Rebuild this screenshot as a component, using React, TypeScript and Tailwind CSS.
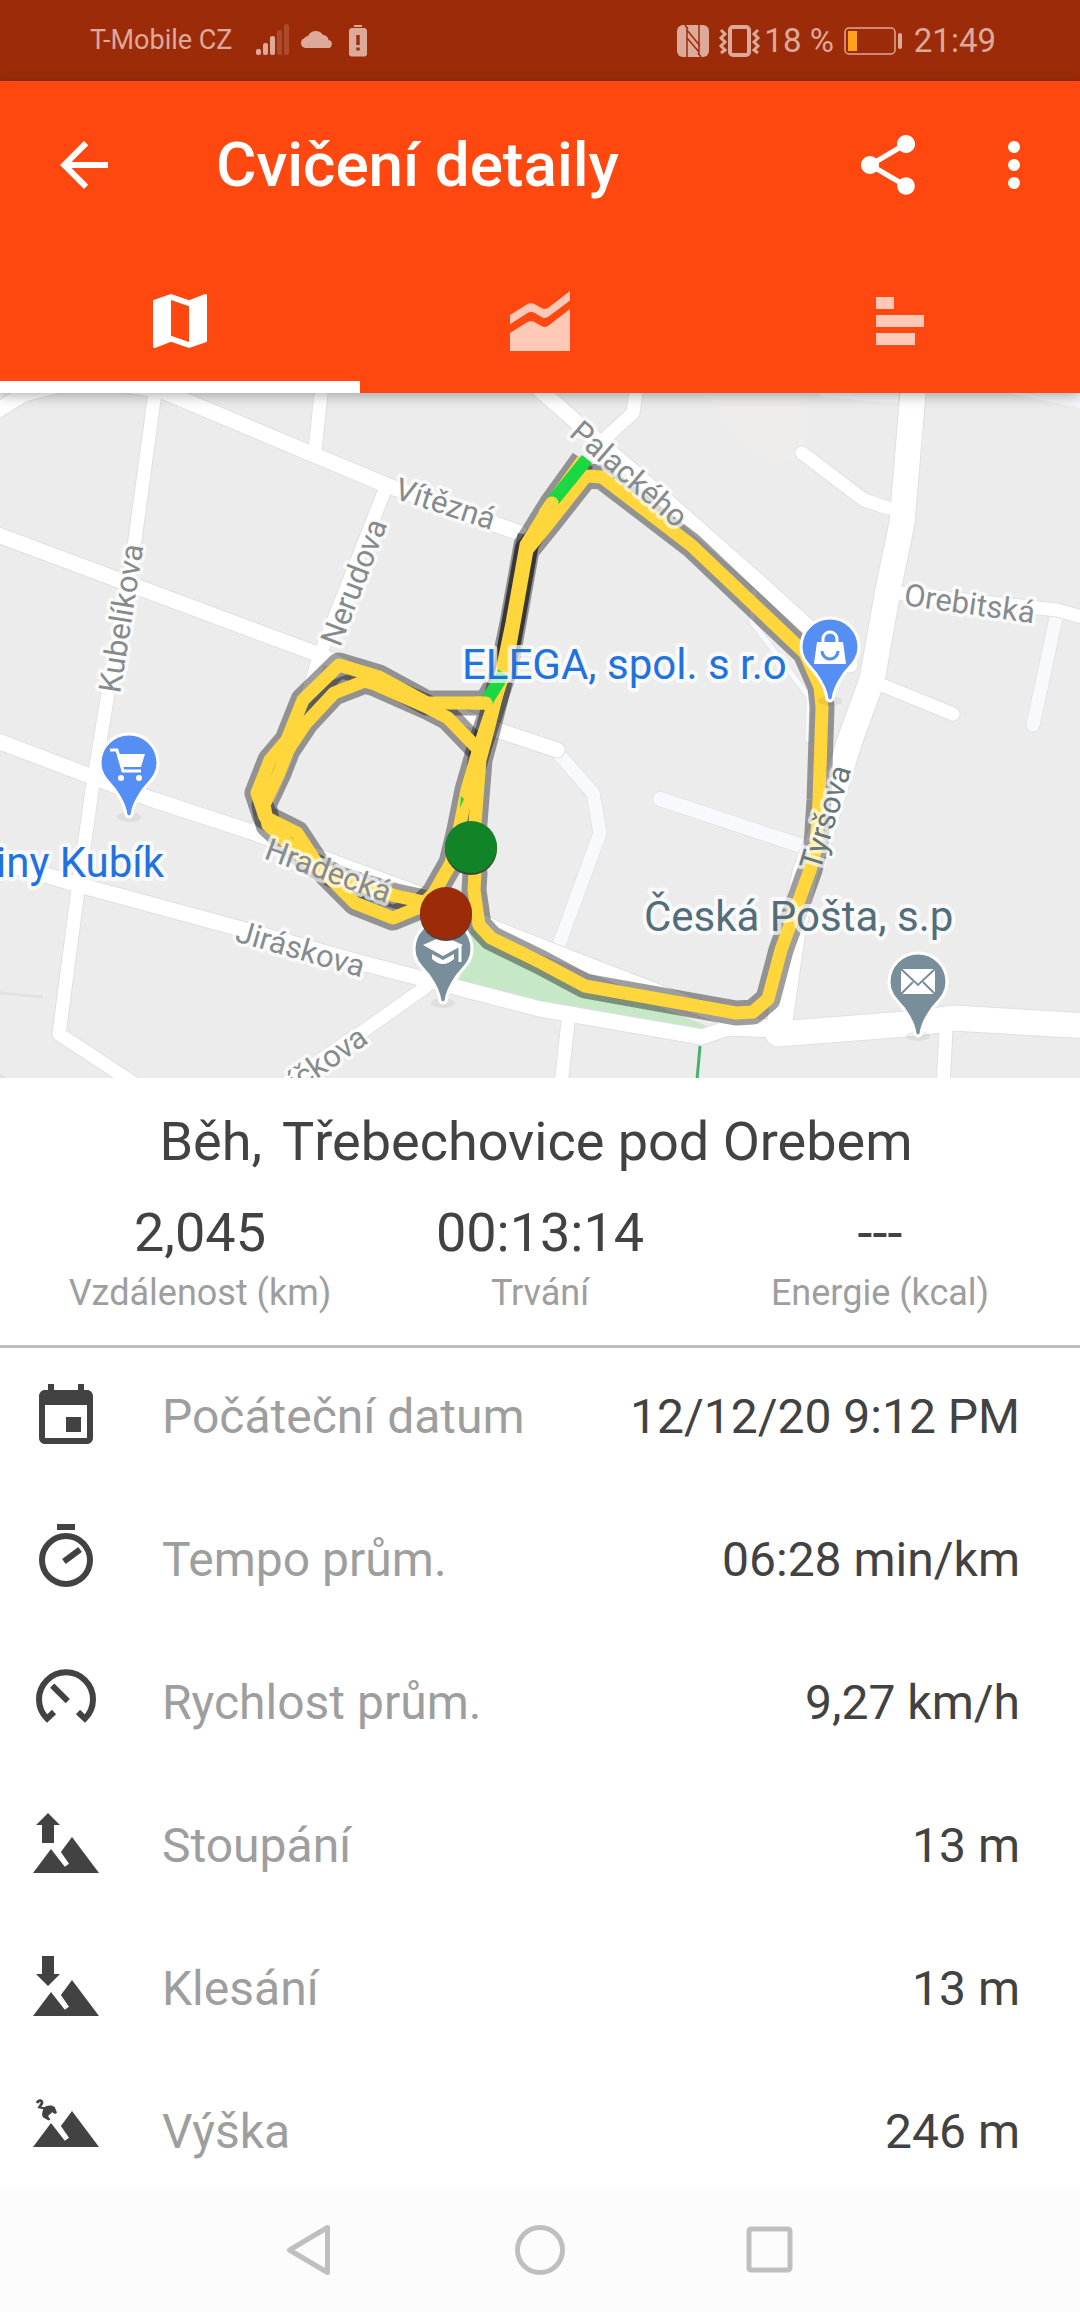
import React, { useState } from "react";

interface IconProps {
  className?: string;
}

const ArrowBackIcon = ({ className }: IconProps) => (
  <svg viewBox="0 0 24 24" fill="currentColor" className={className}>
    <path d="M20 11H7.83l5.59-5.59L12 4l-8 8 8 8 1.41-1.41L7.83 13H20v-2z" />
  </svg>
);

const ShareIcon = ({ className }: IconProps) => (
  <svg viewBox="0 0 24 24" fill="currentColor" className={className}>
    <path d="M18 16.08c-.76 0-1.44.3-1.96.77L8.91 12.7c.05-.23.09-.46.09-.7s-.04-.47-.09-.7l7.05-4.11c.54.5 1.25.81 2.04.81 1.66 0 3-1.34 3-3s-1.34-3-3-3-3 1.34-3 3c0 .24.04.47.09.7L8.04 9.81C7.5 9.31 6.79 9 6 9c-1.66 0-3 1.34-3 3s1.34 3 3 3c.79 0 1.5-.31 2.04-.81l7.12 4.16c-.05.21-.08.43-.08.65 0 1.61 1.31 2.92 2.92 2.92s2.92-1.31 2.92-2.92-1.31-2.92-2.92-2.92z" />
  </svg>
);

const MoreIcon = ({ className }: IconProps) => (
  <svg viewBox="0 0 24 24" fill="currentColor" className={className}>
    <circle cx="12" cy="6" r="2" />
    <circle cx="12" cy="12" r="2" />
    <circle cx="12" cy="18" r="2" />
  </svg>
);

const MapIcon = ({ className }: IconProps) => (
  <svg viewBox="0 0 24 24" fill="currentColor" className={className}>
    <path d="M20.5 3l-.16.03L15 5.1 9 3 3.36 4.9c-.21.07-.36.25-.36.48V20.5c0 .28.22.5.5.5l.16-.03L9 18.9l6 2.1 5.64-1.9c.21-.07.36-.25.36-.48V3.5c0-.28-.22-.5-.5-.5zM15 19l-6-2.11V5l6 2.11V19z" />
  </svg>
);

const ChartIcon = ({ className }: IconProps) => (
  <svg viewBox="0 0 24 24" fill="currentColor" className={className}>
    <path d="M2 10l5.6-3.5Q9 5.6 10.4 6.5L12.5 7.7Q13.7 8.4 15 7.4L22 2v3.2l-7 5.2q-1.3 1-2.5.3L10.4 9.4Q9 8.6 7.6 9.5L2 13.1z" />
    <path d="M2 16l5.6-3.5Q9 11.6 10.4 12.5L12.5 13.7Q13.7 14.4 15 13.4L22 8v14H2z" />
  </svg>
);

const LapsIcon = ({ className }: IconProps) => (
  <svg viewBox="0 0 24 24" fill="currentColor" className={className}>
    <path d="M4 4h6v4H4zM4 10h16v4H4zM4 16h13v4H4z" />
  </svg>
);

const DateIcon = ({ className }: IconProps) => (
  <svg viewBox="0 0 24 24" fill="currentColor" className={className}>
    <path d="M17 12h-5v5h5v-5zM16 1v2H8V1H6v2H5c-1.11 0-1.99.9-1.99 2L3 19c0 1.1.89 2 2 2h14c1.1 0 2-.9 2-2V5c0-1.1-.9-2-2-2h-1V1h-2zm3 18H5V8h14v11z" />
  </svg>
);

const PaceIcon = ({ className }: IconProps) => (
  <svg viewBox="0 0 24 24" fill="none" stroke="currentColor" strokeWidth="2" className={className}>
    <path d="M9 1h6M11.3 12.5l5.4-4" />
    <circle cx="12" cy="12" r="8" />
  </svg>
);

const SpeedIcon = ({ className }: IconProps) => (
  <svg viewBox="0 0 24 24" fill="none" stroke="currentColor" strokeWidth="2" className={className}>
    <path d="M8 15l-2.3 2.2A9 9 0 1 1 18.3 17.2L16 15M7.4 6.2l5.2 5.2" />
  </svg>
);

const AscentIcon = ({ className }: IconProps) => (
  <svg viewBox="0 0 24 24" fill="currentColor" className={className}>
    <path d="M6 1l4 4H8v6H4V5H2z" />
    <path d="M1 21l6-8 4.6 5.9 1.4-1L10.3 14 14 9l9 12z" />
  </svg>
);

const DescentIcon = ({ className }: IconProps) => (
  <svg viewBox="0 0 24 24" fill="currentColor" className={className}>
    <path d="M6 11l4-4H8V1H4v6H2z" />
    <path d="M1 21l6-8 4.6 5.9 1.4-1L10.3 14 14 9l9 12z" />
  </svg>
);

const AltitudeIcon = ({ className }: IconProps) => (
  <svg viewBox="0 0 24 24" fill="currentColor" className={className}>
    <path d="M2.4 2.4C2.7 1.2 4.2 1.3 4 2.4L3.2 3.7 5 4.1" fill="none" stroke="currentColor" strokeWidth="0.9" />
    <path d="M4.5 4.2C5 3 7.5 2.8 8.3 3.8L9 5.6l-.7.4-.9-.6-1.4 1.3.8 1.1-.6.4-1.8-1C3.8 6.5 4 5.5 4.5 4.2z" />
    <path d="M1 17l6-8 4.6 5.9 1.4-1L10.3 10 14 5l9 12z" />
  </svg>
);

const details = [
  { label: "Počáteční datum", value: "12/12/20 9:12 PM", icon: DateIcon },
  { label: "Tempo prům.", value: "06:28 min/km", icon: PaceIcon },
  { label: "Rychlost prům.", value: "9,27 km/h", icon: SpeedIcon },
  { label: "Stoupání", value: "13 m", icon: AscentIcon },
  { label: "Klesání", value: "13 m", icon: DescentIcon },
  { label: "Výška", value: "246 m", icon: AltitudeIcon },
];

const summary = [
  { label: "Vzdálenost (km)", value: "2,045" },
  { label: "Trvání", value: "00:13:14" },
  { label: "Energie (kcal)", value: "---" },
];

const tabs = [
  { id: "map", title: "Mapa", icon: MapIcon },
  { id: "chart", title: "Graf", icon: ChartIcon },
  { id: "laps", title: "Kola", icon: LapsIcon },
];

const StatusBar = () => (
  <div className="flex h-[81px] items-center justify-between bg-[#9c2b0a] pr-[84px] pl-[90px] text-[#dda999]">
    <div className="flex items-center">
      <span className="text-[27px]">T-Mobile CZ</span>
      <svg viewBox="0 0 112 34" className="ml-[23px] h-[34px] w-[112px]" fill="currentColor">
        <rect x="0" y="25" width="5" height="6" rx="2" />
        <rect x="7" y="19" width="5" height="12" rx="2" />
        <rect x="14" y="12" width="5" height="19" rx="2" />
        <rect x="21" y="6" width="5" height="25" rx="2" opacity="0.25" />
        <rect x="28" y="0" width="5" height="31" rx="2" opacity="0.25" />
        <path d="M49 24a5 5 0 0 1-1-9.5 5 5 0 0 1 4-2.500 8.500 8.500 0 0 1 15-1 5.500 5.500 0 0 1 5.500 5A4 4 0 0 1 71 24z" />
        <rect x="98" y="1" width="8" height="2" />
        <path fillRule="evenodd" d="M95 4h14l2 2v25l-2 1.5H95L93 31V6zM100.300 11v10h3.400V11zM100.300 23.500v3h3.400v-3z" />
      </svg>
    </div>
    <div className="flex items-center">
      <svg viewBox="0 0 84 34" className="mr-[3px] h-[34px] w-[84px]" fill="none" stroke="currentColor">
        <rect x="0" y="1" width="32" height="32" rx="6" fill="currentColor" stroke="none" />
        <g stroke="#9c2b0a" strokeWidth="1.5">
          <path d="M10 33V6l13 16M22 1v27L10 14M8 1l3 4M21 29l3 4" />
        </g>
        <rect x="53" y="3" width="19" height="28" rx="3" strokeWidth="4" />
        <path d="M44 6l4 4-4 4 4 4-4 4 4 4-4 3M81 6l-4 4 4 4-4 4 4 4-4 4 4 3" strokeWidth="3" />
      </svg>
      <span className="text-[33px]">18 %</span>
      <svg viewBox="0 0 60 30" className="mx-[10px] h-[30px] w-[60px]">
        <rect x="1" y="2" width="50" height="26" rx="4" fill="none" stroke="currentColor" strokeWidth="1.5" />
        <rect x="4" y="5" width="9" height="20" fill="#ffa21a" />
        <rect x="54" y="7" width="4" height="16" rx="2" fill="currentColor" />
      </svg>
      <span className="text-[33px]">21:49</span>
    </div>
  </div>
);

interface PinProps {
  x: number;
  y: number;
  color: string;
  children: React.ReactNode;
}

const Pin = ({ x, y, color, children }: PinProps) => (
  <g transform={`translate(${x} ${y})`}>
    <ellipse cx="0" cy="54" rx="12" ry="5" fill="#000" opacity="0.06" />
    <path
      d="M-3 52C-4 42-9 34-14 27-20 19-29 13-29 0A29 29 0 1 1 29 0C29 13 20 19 14 27 9 34 4 42 3 52Q0 56-3 52Z"
      fill={color}
      stroke="#fff"
      strokeWidth="3"
    />
    {children}
  </g>
);

const streets = [
  { name: "Kubelíkova", x: 120, y: 694, angle: -81 },
  { name: "Nerudova", x: 340, y: 648, angle: -69 },
  { name: "Vítězná", x: 393, y: 498, angle: 18 },
  { name: "Palackého", x: 568, y: 435, angle: 41 },
  { name: "Orebitská", x: 903, y: 605, angle: 8 },
  { name: "Hradecká", x: 263, y: 858, angle: 20 },
  { name: "Jiráskova", x: 234, y: 941, angle: 16 },
  { name: "íčkova", x: 297, y: 1093, angle: -35 },
];

// one lap of the town, then two passes over the small loop
const tracks = [
  "471,848 475,873 474,890 479,925 491,938 540,962 585,986 736,1013 753,1012 768,999 781,950 810,870 816,847 819,800 822,707 820,687 805,653 691,545 602,477 586,476 549,523 527,550 514,623 505,673",
  "583,460 552,503 526,545 512,623 498,690 488,730 480,760 473,848",
  "504,673 486,703 427,703 379,677 339,665 303,700 287,740 270,760 257,793 265,817 297,833 320,868 355,903 393,918 420,907 434,893 451,863 459,830 467,790 480,745 504,673",
  "477,748 448,718 427,707 375,684 365,681 334,693 306,723 288,750 279,773 264,805 268,825 310,863 340,879 396,896 424,902 446,913",
];

const RouteMap = () => (
  <svg
    viewBox="0 393 1080 685"
    preserveAspectRatio="xMidYMid slice"
    className="block h-[685px] w-full bg-[#ececec]"
    role="img"
    aria-label="Mapa trasy"
  >
    <path d="M705 393H805V457L775 461 750 450Z" fill="#eeedeb" />
    <path d="M473 920L458 986 540 1003 700 1033 712 1028 650 1003 540 965Z" fill="#c6e8c6" />

    {/* minor ways */}
    {[
      { color: "#e3e4e8", extra: 2 },
      { color: "#f8f9fc", extra: 0 },
    ].map(({ color, extra }) => (
      <g key={color} fill="none" stroke={color} strokeLinecap="round" strokeLinejoin="round">
        <path d="M557 752L593 793 600 833 557 950M1056 618L1033 725" strokeWidth={13 + extra} />
        <path d="M660 799L805 847" strokeWidth={14 + extra} />
        <path d="M754 590L752 622 809 697 808 740" strokeWidth={5 + extra} />
      </g>
    ))}
    <path d="M818 393L822 397 898 403V393ZM1010 393L1080 408V393Z" fill="#f4f6fa" />
    <path d="M0 993L43 997M0 1075L6 1079" stroke="#e1e2e6" strokeWidth="3" />

    {/* streets */}
    {[
      { color: "#dfe0e4", extra: 2 },
      { color: "#ffffff", extra: 0 },
    ].map(({ color, extra }) => (
      <g key={color} fill="none" stroke={color} strokeLinecap="round" strokeLinejoin="round">
        <g strokeWidth={13 + extra}>
          <path d="M156 385L134 547 108 693 92 790 78 890 59 1034 135 1084" />
          <path d="M322 385L315 450M386 487L320 655 288 755 255 833" />
          <path d="M637 385L633 413 600 443" />
          <path d="M802 453L864 500 888 508M877 683L953 714" />
          <path d="M890 592L1057 610 1085 618" />
          <path d="M427 986L365 1030 282 1086" />
          <path d="M568 1022L561 1085M946 1030L943 1085" />
        </g>
        <g strokeWidth={15 + extra}>
          <path d="M-8 414L24 394 60 385 110 383 160 390 386 485 520 533" />
          <path d="M-5 534L320 655 425 703 503 732 557 750" />
          <path d="M-5 740L90 776 148 798 255 833 427 897 499 930 588 965 736 1022 790 1032" />
          <path d="M-5 860L79 885 234 927 362 963 420 978 540 1009 702 1037 728 1028 780 1030" />
          <path d="M540 390L574 420 685 517 760 583 850 665" />
        </g>
        <g strokeWidth={25 + extra}>
          <path d="M914 380L902 523 888 590 872 680 850 740 822 830 805 873 793 930 780 1020" />
          <path d="M778 1034L919 1023 953 1018 1090 1026" />
        </g>
      </g>
    ))}
    <path d="M700 1046L697 1080" stroke="#4bb06f" strokeWidth="3" />

    {/* recorded route */}
    {tracks.map((points) => (
      <polyline key={points} points={points} fill="none" stroke="#000" strokeOpacity="0.38" strokeWidth="25" strokeLinejoin="round" />
    ))}
    <path d="M529 535L513 623 503 680" fill="none" stroke="#000" strokeOpacity="0.38" strokeWidth="23" />
    <g fill="none" strokeWidth="13" strokeLinejoin="round">
      {tracks.map((points) => (
        <polyline key={points} points={points} stroke="#ffd63b" />
      ))}
      <path d="M587 459L552 502M504 673L486 702" stroke="#1bd741" />
      <path d="M552 503L545 513M486 703L475 703" stroke="#ffd63b" strokeLinecap="round" />
    </g>
    <path d="M461 796L464 799 460 808Z" fill="#1bd741" />

    <g fontSize="31" fill="#868b8e" stroke="#fff" strokeOpacity="0.7" strokeWidth="7" strokeLinejoin="round" paintOrder="stroke">
      {streets.map(({ name, x, y, angle }) => (
        <text key={name} x={x} y={y} transform={`rotate(${angle} ${x} ${y})`}>
          {name}
        </text>
      ))}
      <text x="820" y="872" transform="rotate(-73 820 872)" fill="#66777c">
        Tyršova
      </text>
    </g>

    <Pin x={830} y={647} color="#558ff3">
      <path d="M-13-5H13L16 17H-16Z" fill="#fff" />
      <path d="M-7-4V-8A7 7 0 0 1 7-8V-4" fill="none" stroke="#fff" strokeWidth="3" />
      <path d="M-8 4A8 8 0 0 0 8 4" fill="none" stroke="#558ff3" strokeWidth="3" />
    </Pin>
    <Pin x={129} y={763} color="#558ff3">
      <path d="M-19-13H-12L-6 8H12" fill="none" stroke="#fff" strokeWidth="3" />
      <path d="M-12-9H16L12 4H-7Z" fill="#fff" />
      <circle cx="-8" cy="15" r="3" fill="#fff" />
      <circle cx="10" cy="15" r="3" fill="#fff" />
    </Pin>
    <Pin x={443} y={949} color="#788f9b">
      <path d="M-20-4L0-13 20-4 0 7Z" fill="#fff" />
      <path d="M-11 5L0 11 11 5V10Q0 20-11 10Z" fill="#fff" />
      <path d="M17-4V13" stroke="#fff" strokeWidth="3" />
    </Pin>
    <Pin x={918} y={982} color="#788f9b">
      <rect x="-17" y="-13" width="34" height="25" fill="#fff" />
      <path d="M-17-13L0 3 17-13M-17 12L-5 0M17 12L5 0" fill="none" stroke="#788f9b" strokeWidth="2" />
    </Pin>

    <circle cx="471" cy="849" r="26" fill="#3a4a30" />
    <circle cx="471" cy="847" r="26" fill="#118428" />
    <circle cx="446" cy="915" r="26" fill="#5a4038" />
    <circle cx="446" cy="913" r="26" fill="#9c2b0a" />

    <g fontSize="42" stroke="#fff" strokeOpacity="0.7" strokeWidth="8" strokeLinejoin="round" paintOrder="stroke">
      <text x="462" y="679" fill="#1f73e0">
        ELEGA, spol. s r.o
      </text>
      <text x="164" y="877" textAnchor="end" fill="#1f73e0">
        iny Kubík
      </text>
      <text x="644" y="931" fill="#526e7a">
        Česká Pošta, s.p
      </text>
    </g>
  </svg>
);

const App = () => {
  const [activeTab, setActiveTab] = useState<string>(tabs[0].id);

  return (
    <div className="flex min-h-screen flex-col bg-white font-[Roboto,sans-serif] text-[#424242]">
      <StatusBar />

      <header className="relative z-10 bg-[#ff480f] text-white shadow-[0_3px_12px_rgba(0,0,0,0.3)]">
        <div className="flex h-[168px] items-center pr-[30px] pl-12">
          <button type="button" aria-label="Zpět">
            <ArrowBackIcon className="size-[72px]" />
          </button>
          <h1 className="ml-24 flex-1 text-[62px] leading-[72px] font-medium">Cvičení detaily</h1>
          <button type="button" aria-label="Sdílet">
            <ShareIcon className="size-[72px]" />
          </button>
          <button type="button" aria-label="Další" className="ml-[54px]">
            <MoreIcon className="size-[72px]" />
          </button>
        </div>
        <div role="tablist" className="grid h-36 grid-cols-3">
          {tabs.map(({ id, title, icon: Icon }) => (
            <button
              key={id}
              type="button"
              role="tab"
              aria-label={title}
              aria-selected={activeTab === id}
              onClick={() => setActiveTab(id)}
              className={
                activeTab === id
                  ? "flex items-center justify-center border-y-12 border-t-transparent border-b-white"
                  : "flex items-center justify-center border-y-12 border-transparent text-[#ffc8b7]"
              }
            >
              <Icon className="size-[72px]" />
            </button>
          ))}
        </div>
      </header>

      <RouteMap />

      <section className="border-b-3 border-[#bdbdbd] px-[30px] pt-8 pb-7">
        <h2 className="flex justify-center gap-5 pr-2 text-[54px] leading-[64px]">
          <span>Běh,</span>
          <span>Třebechovice pod Orebem</span>
        </h2>
        <dl className="mt-[23px] grid grid-cols-3 text-center">
          {summary.map(({ label, value }) => (
            <div key={label} className="flex flex-col-reverse">
              <dt className="text-4xl leading-12 text-[#9e9e9e]">{label}</dt>
              <dd className="text-[54px] leading-[72px]">{value}</dd>
            </div>
          ))}
        </dl>
      </section>

      <dl className="flex flex-col gap-[71px] pt-[33px] pr-[60px] pb-5 pl-[30px] text-5xl">
        {details.map(({ label, value, icon: Icon }) => (
          <div key={label} className="flex h-[72px] items-center">
            <Icon className="size-[72px]" />
            <dt className="ml-[60px] flex-1 text-[#9e9e9e]">{label}</dt>
            <dd>{value}</dd>
          </div>
        ))}
      </dl>

      <nav className="mt-auto flex h-[124px] items-center justify-center bg-[#fcfcfc] text-[#bfbfbf]">
        <button type="button" aria-label="Zpět" className="flex w-[230px] justify-center">
          <svg viewBox="0 0 60 60" className="size-[60px]" fill="none" stroke="currentColor" strokeWidth="5" strokeLinejoin="round">
            <path d="M47.5 7.5V52.5L9.5 30z" />
          </svg>
        </button>
        <button type="button" aria-label="Domů" className="flex w-[230px] justify-center">
          <svg viewBox="0 0 60 60" className="size-[60px]" fill="none" stroke="currentColor" strokeWidth="5">
            <circle cx="30" cy="30" r="22.5" />
          </svg>
        </button>
        <button type="button" aria-label="Přehled" className="flex w-[230px] justify-center">
          <svg viewBox="0 0 60 60" className="size-[60px]" fill="none" stroke="currentColor" strokeWidth="5">
            <rect x="9" y="9" width="41" height="41" rx="2" />
          </svg>
        </button>
      </nav>
    </div>
  );
};

export default App;
